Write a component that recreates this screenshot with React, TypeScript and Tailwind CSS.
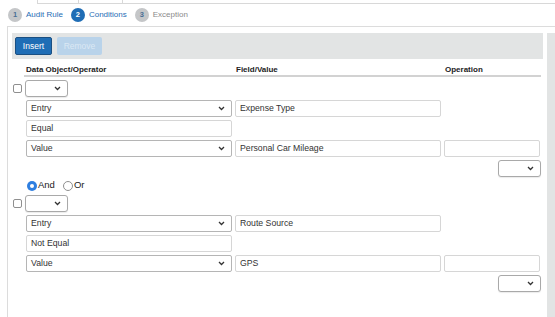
import React from 'react';

const Chevron: React.FC = () => (
  <svg width="7" height="5" viewBox="0 0 7 5" className="shrink-0">
    <path d="M1 1l2.5 2.5L6 1" fill="none" stroke="#333" strokeWidth="1.3" />
  </svg>
);

const SmallSelect: React.FC = () => (
  <div className="flex h-[17px] w-[43px] items-center justify-end rounded-[3px] border border-[#a9a9a9] bg-white pr-[6px] shadow-[0_1px_1px_rgba(0,0,0,0.08)]">
    <Chevron />
  </div>
);

const Select: React.FC<{ label: string }> = ({ label }) => (
  <div className="flex h-[17px] w-[206px] items-center justify-between rounded-[2px] border border-[#b5b5b5] bg-white pl-[4px] pr-[6px] text-[8.7px] text-[#333]">
    <span>{label}</span>
    <Chevron />
  </div>
);

const Input: React.FC<{ value?: string; w?: string }> = ({ value, w = 'w-[206px]' }) => (
  <div className={`flex h-[17px] ${w} items-center rounded-[2px] border border-[#d6d6d6] bg-white pl-[4px] text-[8.7px] text-[#333]`}>
    {value}
  </div>
);

const Checkbox: React.FC = () => (
  <div className="ml-px h-[9px] w-[9px] rounded-[2px] border border-[#8f8f8f] bg-white" />
);

const Condition: React.FC<{ field: string; op: string; value: string }> = ({ field, op, value }) => (
  <div className="flex flex-col gap-[3px]">
    <div className="flex items-center gap-[3px]">
      <Checkbox />
      <SmallSelect />
    </div>
    <div className="flex gap-[3px] pl-[14px]">
      <Select label="Entry" />
      <Input value={field} />
    </div>
    <div className="flex gap-[3px] pl-[14px]">
      <Input value={op} />
    </div>
    <div className="flex gap-[3px] pl-[14px]">
      <Select label="Value" />
      <Input value={value} />
      <Input w="w-[96px]" />
    </div>
    <div className="flex justify-end pr-[2px]">
      <SmallSelect />
    </div>
  </div>
);

const Step: React.FC<{ n: number; label: string; active?: boolean; done?: boolean }> = ({ n, label, active, done }) => (
  <div className="flex items-center gap-[4px]">
    <div
      className={`flex h-[14px] w-[14px] items-center justify-center rounded-full text-[7.5px] font-bold ${
        active ? 'bg-[#1f6db5] text-white' : 'bg-[#c4c6c8] text-[#4a6f94]'
      }`}
    >
      {n}
    </div>
    <span className={`text-[8px] ${active || done ? 'text-[#1f6db5]' : 'text-[#8a8a8a]'}`}>{label}</span>
  </div>
);

function App() {
  return (
    <div className="h-[317px] w-[555px] overflow-hidden bg-white font-['Liberation_Sans',Arial,sans-serif] text-[#333]">
      {/* cut-off tab bar */}
      <div className="ml-[37px] flex h-[4px] border-b border-[#d8d8d8]">
        <div className="w-[41px] border-l border-[#d8d8d8]" />
        <div className="w-[44px] border-l border-[#d8d8d8]" />
        <div className="flex-1 border-l border-[#d8d8d8]" />
      </div>

      {/* wizard steps */}
      <div className="flex h-[22px] items-center gap-[8px] pl-[8px]">
        <Step n={1} label="Audit Rule" done />
        <Step n={2} label="Conditions" active />
        <Step n={3} label="Exception" />
      </div>

      {/* panel */}
      <div className="ml-[7px] h-full border-l border-t border-[#dcdcdc] pt-[6px]">
        <div className="flex h-full gap-[4px] pl-[4px]">
          <div className="w-[531px]">
            <div className="flex h-[26px] items-center gap-[5px] bg-[#e2e4e4] px-[3px]">
              <button className="h-[18px] w-[37px] rounded-[2px] border border-[#1a4f82] bg-[#1f6db5] text-[8.5px] text-white">
                Insert
              </button>
              <button className="h-[18px] w-[45px] rounded-[2px] bg-[#b9d3ea] text-[8.5px] text-[#dbe8f4]">
                Remove
              </button>
            </div>

            <div className="ml-[12px] mr-[2px] mt-[5px] flex h-[13px] items-start border-b-2 border-[#d2d2d2] text-[8px] font-bold text-[#222]">
              <span className="w-[212px] pl-[2px]">Data Object/Operator</span>
              <span className="w-[209px]">Field/Value</span>
              <span>Operation</span>
            </div>

            <div className="mt-[3px]">
              <Condition field="Expense Type" op="Equal" value="Personal Car Mileage" />
            </div>

            <div className="mt-[3px] flex h-[11px] items-center gap-[8px] pl-[15px] text-[9.5px] text-[#222]">
              <label className="flex items-center gap-[1px]">
                <span className="flex h-[10px] w-[10px] items-center justify-center rounded-full bg-[#2f7fe0]">
                  <span className="h-[4px] w-[4px] rounded-full bg-white" />
                </span>
                And
              </label>
              <label className="flex items-center gap-[1px]">
                <span className="h-[10px] w-[10px] rounded-full border border-[#8f8f8f] bg-white" />
                Or
              </label>
            </div>

            <div className="mt-[4px]">
              <Condition field="Route Source" op="Not Equal" value="GPS" />
            </div>
          </div>
          <div className="flex-1 bg-[#e2e4e4]" />
        </div>
      </div>
    </div>
  );
}

export default App;
